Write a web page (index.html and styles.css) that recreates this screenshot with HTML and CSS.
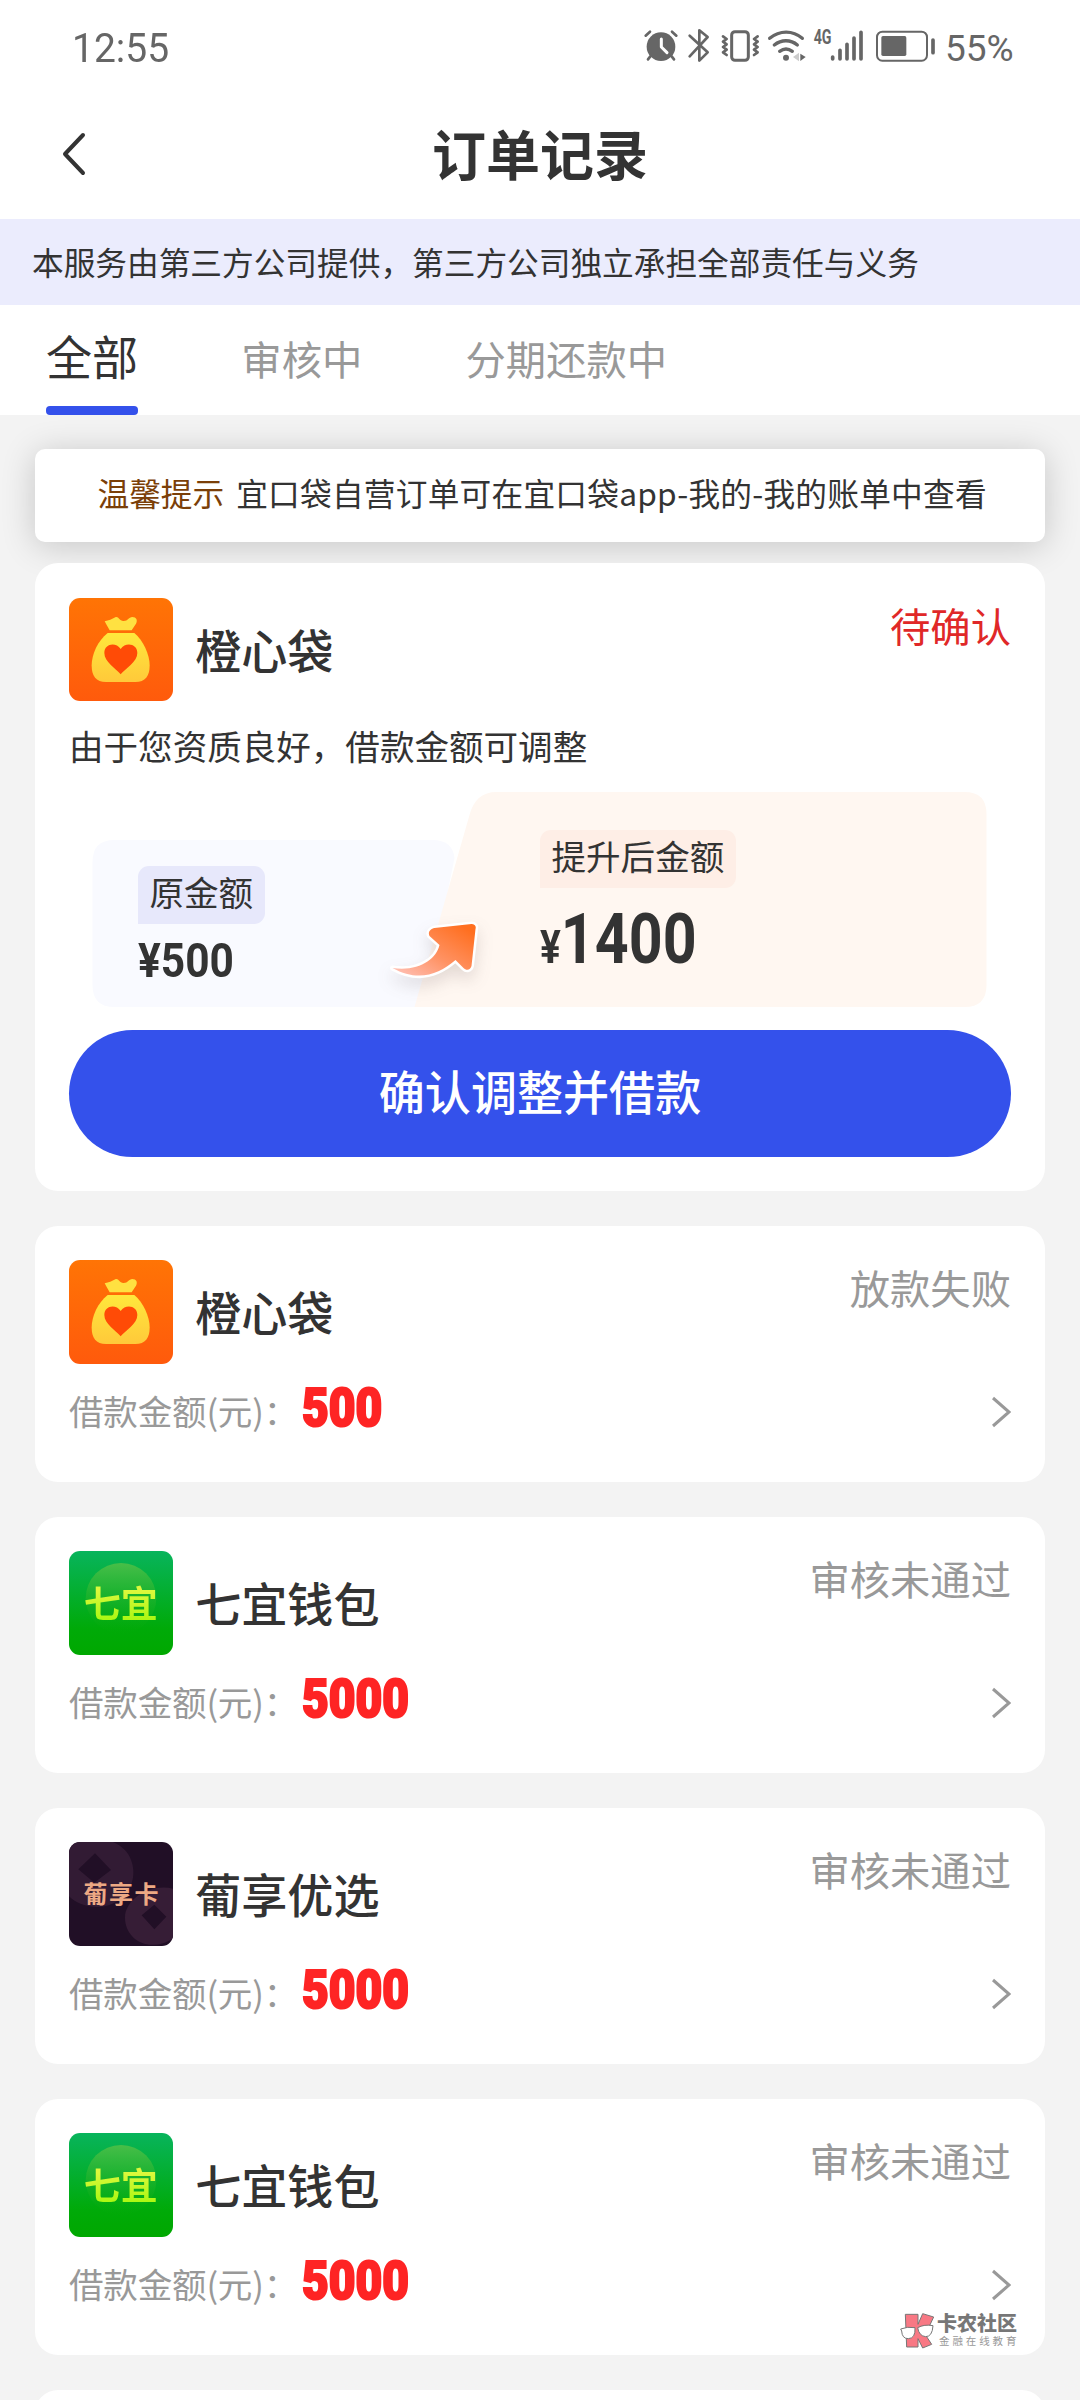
FILE: index.html
```html
<!DOCTYPE html>
<html lang="zh-CN">
<head>
<meta charset="utf-8">
<title>订单记录</title>
<link rel="stylesheet" href="styles.css">
</head>
<body>
<svg class="defs" width="0" height="0" aria-hidden="true">
  <defs>
    <linearGradient id="orange" x1="0" y1="0" x2="0" y2="1"><stop offset="0" stop-color="#ff7405"/><stop offset="1" stop-color="#ff5a0c"/></linearGradient>
    <linearGradient id="gold" x1="0" y1="0" x2="0" y2="1"><stop offset="0" stop-color="#ffe83c"/><stop offset="1" stop-color="#ffc93a"/></linearGradient>
    <linearGradient id="green" x1="0" y1="0" x2="0" y2="1"><stop offset="0" stop-color="#08b45c"/><stop offset="0.75" stop-color="#00aa08"/><stop offset="1" stop-color="#00a800"/></linearGradient>
    <linearGradient id="halo" x1="0" y1="0" x2="0" y2="1"><stop offset="0" stop-color="#48be48"/><stop offset="1" stop-color="#10ac10" stop-opacity="0"/></linearGradient>
  </defs>
  <symbol id="logo-bag" viewBox="0 0 312 312">
    <rect width="312" height="312" fill="url(#orange)"/>
    <path fill="#ffe141" d="M107 70c12-2 22-6 32-12 10-4 12 12 25 11 13 0 15-12 26-12 12 0 17 10 11 20l-13 20h-66l-9-16z"/>
    <path fill="url(#gold)" d="M116 105h80c26 22 46 64 46 98 0 30-13 49-43 49h-88c-30 0-43-19-43-49 0-34 18-74 48-98z"/>
    <path fill="#ff4b06" d="M155 229c-15-18-49-38-49-64 0-28 34-34 49-12 15-22 50-16 50 12 0 26-35 46-50 64z"/>
  </symbol>
  <symbol id="logo-green" viewBox="0 0 312 312">
    <rect width="312" height="312" fill="url(#green)"/>
    <circle cx="156" cy="142" r="106" fill="url(#halo)"/>
  </symbol>
  <symbol id="logo-dark" viewBox="0 0 312 312">
    <rect width="312" height="312" fill="#210f26"/>
    <path fill="#321b34" fill-rule="evenodd" d="M0 12C70-30 165-10 187 56c25 72-30 139-102 139-40 0-66-14-85-32zM78 34L28 82l48 40 50-38z"/>
    <path fill="#361d36" fill-rule="evenodd" d="M312 140c-64-17-144 28-144 87 0 50 42 85 89 81 24-1 43-10 55-20zM256 188l-38 32 38 42 36-38z"/>
  </symbol>
</svg>

<header class="top">
  <div class="statusbar">
    <span class="clock">12:55</span>
    <div class="indicators">
      <svg class="status-icons" viewBox="60 55 900 108" fill="none" stroke="#666" stroke-linecap="round" stroke-linejoin="round">
        <circle cx="123" cy="111" r="43" fill="#666" stroke="none"/>
        <path stroke="#fff" stroke-width="9" d="M124 88v24l17 17"/>
        <path stroke-width="8" d="M77 78l13-12M169 78l-13-12M91 140l-7 9M155 140l7 9"/>
        <path stroke-width="8" d="M209 78l54 50-25 25V62l25 20-54 58"/>
        <rect x="335" y="66" width="50" height="86" rx="10" stroke-width="9"/>
        <path stroke-width="8" d="M309 80l11 8-11 8 11 8-11 8 11 8-11 8 11 8M413 80l-11 8 11 8-11 8 11 8-11 8 11 8-11 8"/>
        <path stroke-width="10" d="M449 86c30-25 69-25 98 0M463 106c21-17 49-17 69 0M479 125c12-9 26-9 38 0"/>
        <circle cx="498" cy="144" r="9" fill="#666" stroke="none"/>
        <path fill="#ccc" stroke="none" d="M537 129v26l-18-13z"/><path fill="#666" stroke="none" d="M541 132l16 10-16 12z"/>
        <g transform="translate(581 104) scale(.82 1.12)"><text class="network">4G</text></g>
        <path stroke-width="11" d="M638 142v6M660 122v26M681 104v44M702 85v63M723 68v80"/>
        <rect x="771" y="66" width="150" height="87" rx="16" stroke-width="6"/>
        <rect x="784" y="79" width="75" height="60" rx="5" fill="#666" stroke="none"/>
        <path stroke-width="11" d="M939 91v38"/>
      </svg>
      <span class="battery">55%</span>
    </div>
  </div>
  <div class="nav">
    <svg class="back" viewBox="0 0 26 44"><path d="M23 3L5 22l18 19" fill="none" stroke="#333" stroke-width="4" stroke-linecap="round" stroke-linejoin="round"/></svg>
    <h1 class="title">订单记录</h1>
  </div>
</header>

<div class="notice">本服务由第三方公司提供，第三方公司独立承担全部责任与义务</div>

<nav class="tabs">
  <span class="tab tab-active">全部</span>
  <span class="tab">审核中</span>
  <span class="tab">分期还款中</span>
</nav>

<main class="list">
  <div class="tip"><span class="tip-label">温馨提示</span><span class="tip-text">宜口袋自营订单可在宜口袋app-我的-我的账单中查看</span></div>

  <section class="card card-offer">
    <div class="card-head">
      <div class="logo"><svg><use href="#logo-bag"/></svg></div>
      <h2 class="name">橙心袋</h2>
      <span class="state state-pending">待确认</span>
    </div>
    <p class="desc">由于您资质良好，借款金额可调整</p>
    <div class="compare">
      <svg class="compare-bg" viewBox="0 0 894 216">
        <defs><linearGradient id="arrow" x1="1" y1="0" x2="0" y2="1"><stop offset="0.1" stop-color="#ff6f20"/><stop offset="0.55" stop-color="#ff9263"/><stop offset="1" stop-color="#ffc4bc"/></linearGradient></defs>
        <path fill="#f9faff" d="M22 48h318q20 0 22 18l-30 149H22q-22 0-22-22V70q0-22 22-22z"/>
        <path fill="#fff7f1" d="M404 0h468q22 0 22 22v171q0 22-22 22H322l55-192q6-23 27-23z"/>
        <path class="arrow" fill="url(#arrow)" stroke="#fff" stroke-width="5" stroke-linejoin="round" paint-order="stroke" d="M300 176c26 4 44-9 47-23l-10-9c-2-4 1-7 5-8l37-4c3 0 5 2 4 5l-4 37c-1 4-5 5-8 2l-8-8c-17 15-38 22-63 8z"/>
      </svg>
      <div class="before">
        <span class="tag tag-before">原金额</span>
        <span class="sum sum-before">¥500</span>
      </div>
      <div class="after">
        <span class="tag tag-after">提升后金额</span>
        <span class="sum sum-after"><span class="currency">¥</span>1400</span>
      </div>
    </div>
    <div class="confirm">确认调整并借款</div>
  </section>

  <section class="card">
    <div class="card-head"><div class="logo"><svg><use href="#logo-bag"/></svg></div><h2 class="name">橙心袋</h2><span class="state">放款失败</span></div>
    <div class="amount-row"><span class="label">借款金额(元)：</span><span class="amount">500</span><svg class="more" viewBox="0 0 20 32"><path d="M2 2l16 14L2 30"/></svg></div>
  </section>
  <section class="card">
    <div class="card-head"><div class="logo"><svg><use href="#logo-green"/></svg><span class="logo-text logo-text-green">七宜</span></div><h2 class="name">七宜钱包</h2><span class="state">审核未通过</span></div>
    <div class="amount-row"><span class="label">借款金额(元)：</span><span class="amount">5000</span><svg class="more" viewBox="0 0 20 32"><path d="M2 2l16 14L2 30"/></svg></div>
  </section>
  <section class="card">
    <div class="card-head"><div class="logo"><svg><use href="#logo-dark"/></svg><span class="logo-text logo-text-dark">葡享卡</span></div><h2 class="name">葡享优选</h2><span class="state">审核未通过</span></div>
    <div class="amount-row"><span class="label">借款金额(元)：</span><span class="amount">5000</span><svg class="more" viewBox="0 0 20 32"><path d="M2 2l16 14L2 30"/></svg></div>
  </section>
  <section class="card">
    <div class="card-head"><div class="logo"><svg><use href="#logo-green"/></svg><span class="logo-text logo-text-green">七宜</span></div><h2 class="name">七宜钱包</h2><span class="state">审核未通过</span></div>
    <div class="amount-row"><span class="label">借款金额(元)：</span><span class="amount">5000</span><svg class="more" viewBox="0 0 20 32"><path d="M2 2l16 14L2 30"/></svg></div>
  </section>
  <section class="card"></section>
</main>

<div class="watermark">
  <svg class="wm-logo" viewBox="0 0 102 108" stroke="#777" stroke-width="3">
    <path fill="#f87884" d="M16 4h38v30L68 2l33 10-17 36-10 14 21 32-27 11-14-28v25H20z"/>
    <path fill="#fff" d="M2 48q20-8 43-4 2 32-20 33Q6 77 5 54zM53 44q20-11 46-6-2 33-22 33-20-2-24-27z"/>
  </svg>
  <div class="wm-text"><span class="wm-name">卡农社区</span><span class="wm-sub">金融在线教育</span></div>
</div>
</body>
</html>
```
FILE: styles.css
```css
* { box-sizing: border-box; }

body {
  margin: 0;
  width: 1080px;
  height: 2400px;
  overflow: hidden;
  position: relative;
  background: #f3f3f3;
  color: #333;
  font-family: "Noto Sans CJK SC", sans-serif;
}

.defs { display: block; height: 0; }

/* header */
.top { height: 219px; background: #fff; }
.statusbar {
  height: 95px;
  display: flex;
  justify-content: space-between;
  padding: 0 65px 0 72px;
  color: #666;
  font-family: Roboto, sans-serif;
}
.clock { font-size: 40px; line-height: 97px; transform: scaleX(.975); transform-origin: left; }
.indicators { display: flex; gap: 5px; }
.status-icons { width: 300px; height: 36px; margin-top: 28px; }
.network { font: 700 52px Roboto, sans-serif; fill: #666; stroke: none; }
.battery { width: 70px; font-size: 37px; line-height: 97px; }
.nav {
  height: 124px;
  display: grid;
  grid-template-columns: 26px 1fr 26px;
  align-items: center;
  padding: 0 60px;
}
.back { width: 26px; height: 44px; margin-top: -6px; }
.title { margin: 0; text-align: center; font-size: 54px; font-weight: 700; line-height: 116px; height: 124px; }

.notice {
  height: 86px;
  padding-left: 32px;
  background: #ebecfd;
  font-size: 31.68px;
  line-height: 84px;
}

.tabs {
  height: 110px;
  display: flex;
  gap: 103.2px;
  padding-left: 46px;
  background: #fff;
}
.tab { font-size: 40.32px; line-height: 106px; color: #999; }
.tab-active {
  display: flex;
  flex-direction: column;
  justify-content: space-between;
  font-size: 46.08px;
  line-height: 101px;
  color: #333;
  height: 110px;
}
.tab-active::after { content: ""; height: 9px; border-radius: 4px; background: #3451eb; }

/* list */
.list { height: 1985px; overflow: hidden; padding: 34px 35px 0; }
.tip {
  height: 93px;
  margin-bottom: 21px;
  padding-left: 62.5px;
  display: flex;
  gap: 12px;
  border-radius: 10px;
  background: #fff;
  box-shadow: 0 4px 34px rgba(0, 0, 0, .19);
  font-size: 31.68px;
  line-height: 87px;
  white-space: nowrap;
}
.tip-label { color: #7b3f08; }
.tip-text { letter-spacing: .24px; }

.card {
  position: relative;
  height: 256.3px;
  margin-bottom: 34.6px;
  padding: 34.5px 34px;
  border-radius: 23px;
  background: #fff;
}
.card-offer { height: 628.4px; }
.card-head { display: flex; height: 103.7px; }
.logo { position: relative; width: 103.7px; height: 103.7px; border-radius: 11px; overflow: hidden; }
.logo svg { display: block; width: 104px; height: 104px; }
.logo-text {
  position: absolute;
  inset: 0;
  text-align: center;
  font-weight: 700;
  white-space: nowrap;
}
.logo-text-green {
  font-size: 37px;
  line-height: 103px;
  background: linear-gradient(#dcf83c 38%, #a8f810 68%);
  -webkit-background-clip: text;
  background-clip: text;
  color: transparent;
}
.logo-text-dark { font-size: 24px; line-height: 102px; letter-spacing: 1.5px; padding-left: 2px; color: #eda984; }
.name { flex: 1; margin: 0 0 0 22.5px; font-size: 46.08px; font-weight: 500; line-height: 102px; }
.state { font-size: 40.32px; line-height: 53px; color: #999; }
.state-pending { color: #e02828; }

.amount-row { display: flex; height: 100px; padding-top: 3px; }
.label { width: 233px; font-size: 34.56px; line-height: 87px; letter-spacing: -.2px; color: #999; white-space: nowrap; }
.amount {
  flex: 1;
  font: 900 53px/82px Roboto, sans-serif;
  -webkit-text-stroke: 2.2px #fe2424;
  color: #fe2424;
  transform: scaleX(.87);
  transform-origin: left;
}
.more { width: 20px; height: 32px; margin-top: 29px; fill: none; stroke: #999; stroke-width: 3; }

/* amount adjustment */
.desc { margin: 19px 0 0; font-size: 34.56px; line-height: 50px; }
.compare {
  position: relative;
  width: 895px;
  height: 216px;
  margin: 22px 0 0 23px;
  display: grid;
  grid-template-columns: 402px 1fr;
  padding-left: 46px;
}
.compare-bg { position: absolute; left: 0; top: 0; width: 895px; height: 216px; overflow: visible; }
.arrow { filter: drop-shadow(0 8px 8px rgba(80, 60, 60, .16)); }
.before, .after { position: relative; display: flex; flex-direction: column; align-items: flex-start; }
.before { padding-top: 74px; }
.after { padding-top: 38px; }
.tag {
  height: 58px;
  padding: 0 11.5px;
  border-radius: 11px 11px 11px 0;
  font-size: 34.56px;
  line-height: 51px;
  white-space: nowrap;
}
.tag-before { background: #e7e8fb; }
.tag-after { background: #feeee6; }
.sum { font-family: Roboto, sans-serif; font-weight: 700; transform-origin: left; }
.sum-before { font-size: 48px; line-height: 74px; transform: scaleX(.885); }
.sum-after { font-size: 70px; line-height: 102px; transform: scaleX(.845); }
.currency { font-size: 46px; }

.confirm {
  height: 127px;
  margin-top: 22px;
  border-radius: 64px;
  background: #3451eb;
  color: #fff;
  text-align: center;
  font-size: 46.08px;
  font-weight: 500;
  line-height: 121px;
}

/* community mark laid over the list */
.watermark { position: absolute; left: 900px; top: 2313px; display: flex; gap: 3px; color: #777; }
.wm-logo { width: 34px; height: 36px; }
.wm-text { display: flex; flex-direction: column; white-space: nowrap; }
.wm-name { font-size: 20px; font-weight: 900; line-height: 20px; }
.wm-sub { margin-left: 2px; font-size: 10.5px; letter-spacing: 2.9px; line-height: 15px; color: #999; }
```
